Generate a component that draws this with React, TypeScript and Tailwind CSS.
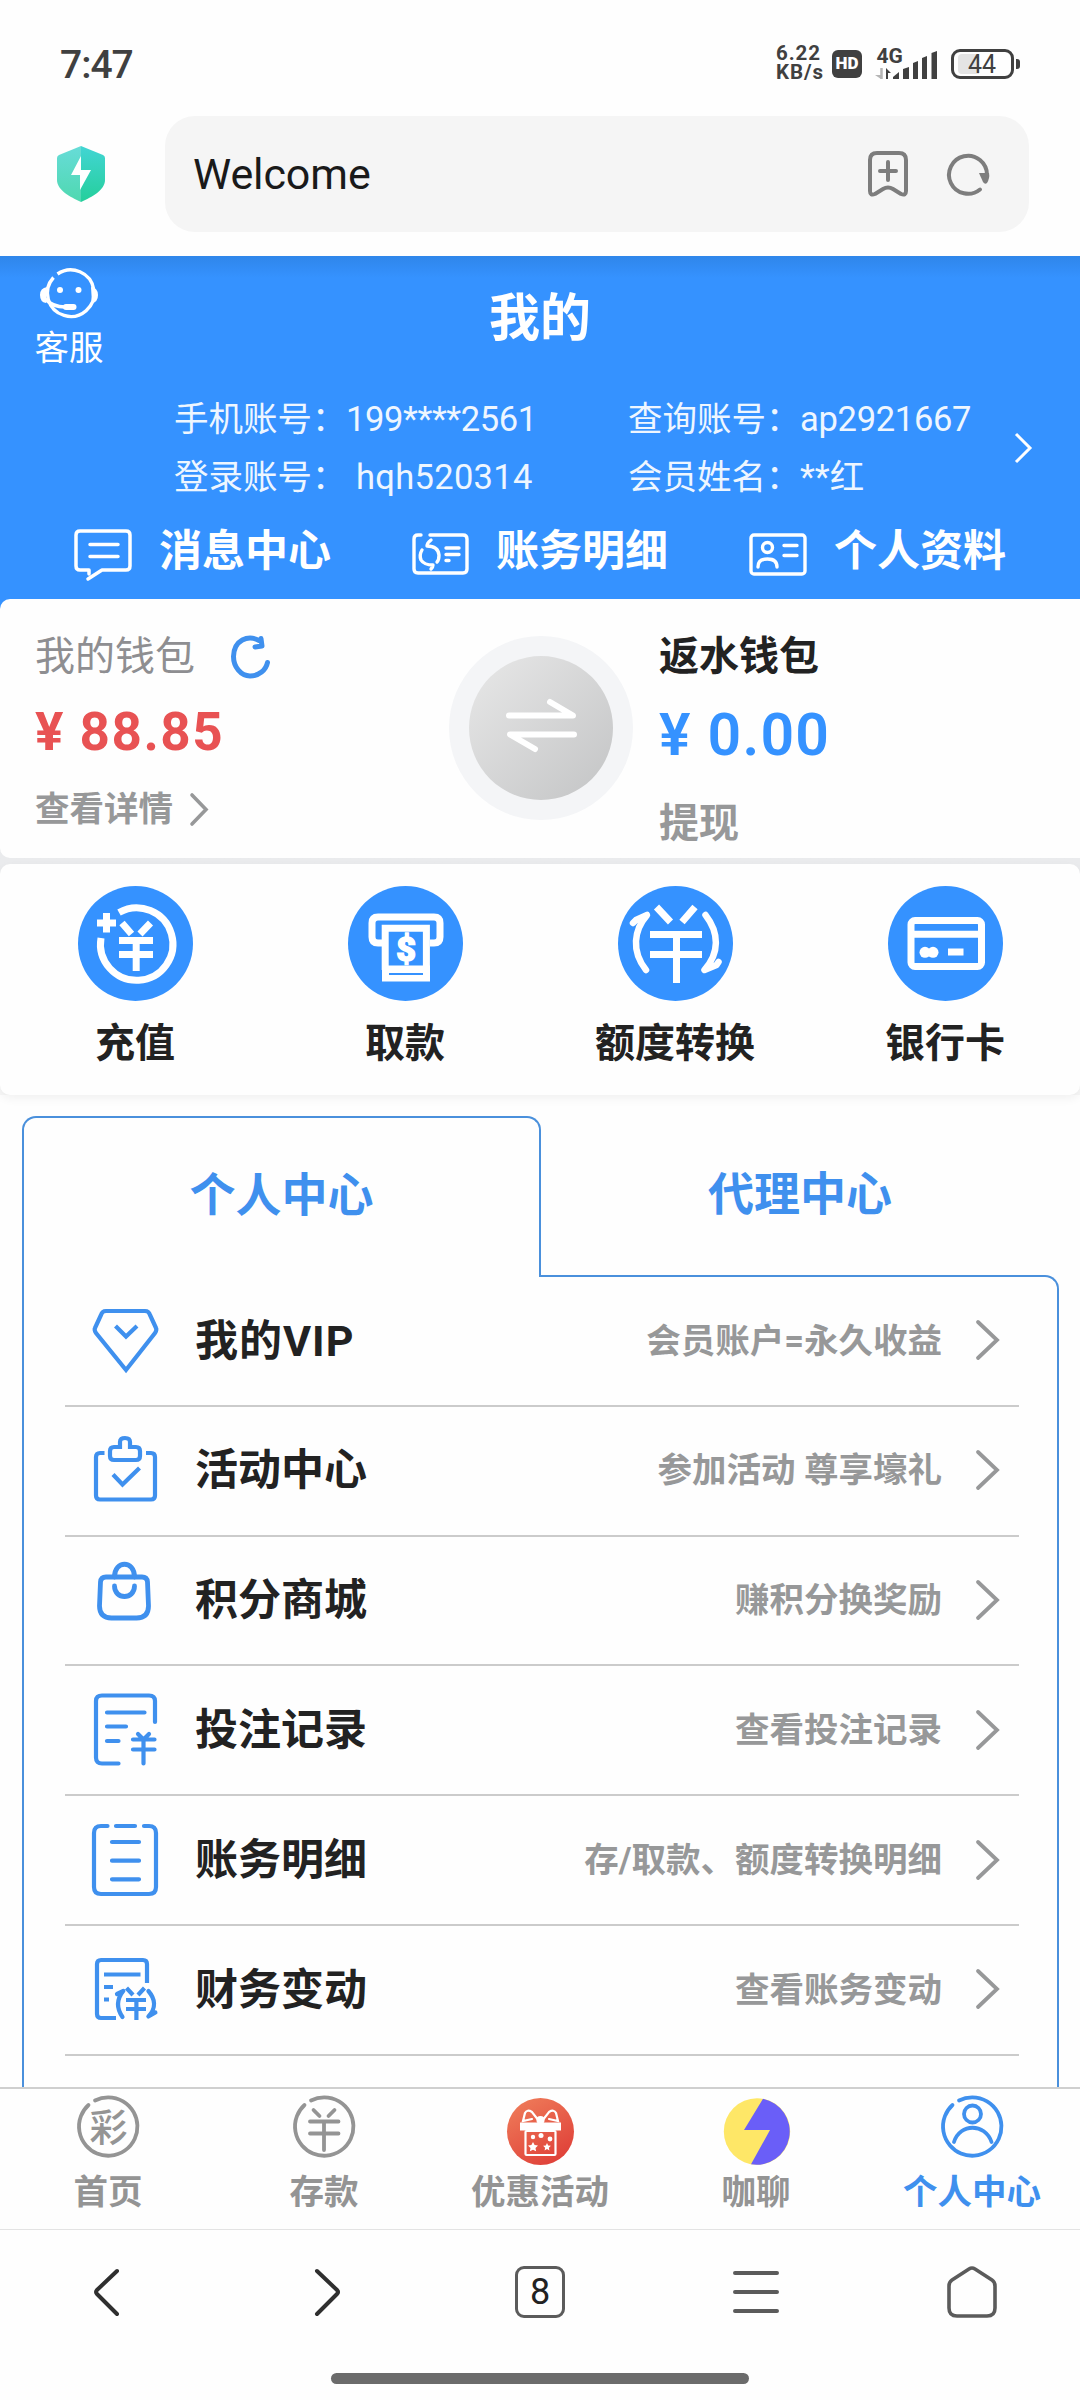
import type { ReactNode } from "react";

const BLUE = "#3592ff";

type IconProps = { children: ReactNode; w: number; h: number; className?: string };

const Icon = ({ children, w, h, className }: IconProps) => (
  <svg
    width={w}
    height={h}
    viewBox={`0 0 ${w} ${h}`}
    fill="none"
    stroke="currentColor"
    className={`block shrink-0 overflow-visible ${className ?? ""}`}
  >
    {children}
  </svg>
);

const StatusBar = () => (
  <div className="flex h-[116px] items-start justify-between pt-[46px] pr-[60px] pl-[60px] text-[#404040]">
    <span className="-mt-px text-[39px] leading-[40px] font-medium tracking-[-1px]">
      7:47
    </span>
    <div className="flex h-[36px] items-start">
      <div className="-mt-[2px] w-[56px] text-[20.5px] leading-[19px] font-bold tracking-[0.9px] whitespace-pre-line">
        {"6.22\nKB/s"}
      </div>
      <div className="mt-[4px] flex h-[28px] w-[30px] items-center justify-center rounded-[6px] bg-[#404040] text-[17px] font-black text-white">
        HD
      </div>
      <div className="ml-[13px] w-[76px]">
        <Icon w={64} h={34}>
          <text
            x="1.5"
            y="16.5"
            fill="currentColor"
            stroke="none"
            className="text-[21px] font-bold"
          >
            4G
          </text>
          <path d="M0 29h6v4z" fill="#b5b5b5" stroke="none" />
          <path d="M6.5 22v11" stroke="#b5b5b5" strokeWidth="2.5" />
          <path d="M11 33V22l5 5h-3v6z" fill="currentColor" stroke="none" />
          <g fill="currentColor" stroke="none">
            <path d="M18 33v-2l6-5v7z" />
            <path d="M28 33V23l6-2v12z" />
            <path d="M38 33V17l5-2v18z" />
            <path d="M47 33V12l5-2v23z" />
            <path d="M56.500 33V7l5.500-2v28z" />
          </g>
        </Icon>
      </div>
      <div className="mt-[3px] flex h-[30px] w-[63px] items-center rounded-[9px] border-3 border-[#404040] pl-1">
        <div className="h-5 w-[21px] rounded-l-[4px] bg-[#e4e4e4]" />
        <span className="-ml-[11px] text-[25px] leading-[25px]">44</span>
      </div>
      <div className="mt-[13px] ml-[2px] h-[10px] w-1 rounded-r-[3px] bg-[#404040]" />
    </div>
  </div>
);

const AddressBar = () => (
  <div className="flex h-[140px] items-start">
    <Icon w={48} h={56} className="mt-[30px] ml-[57px]">
      <defs>
        <linearGradient id="shieldL" x1="0" y1="0" x2="0" y2="1">
          <stop stopColor="#67dcd8" />
          <stop offset="1" stopColor="#4fd8b0" />
        </linearGradient>
        <linearGradient id="shieldR" x1="0" y1="0" x2="0" y2="1">
          <stop stopColor="#42d5d4" />
          <stop offset="1" stopColor="#25cf9b" />
        </linearGradient>
      </defs>
      <g stroke="none">
        <path d="M24 0 2 9Q0 10 0 12v22c0 10 13 17 24 22z" fill="url(#shieldL)" />
        <path d="M24 0l22 9q2 1 2 3v22c0 10-13 17-24 22z" fill="url(#shieldR)" />
        <path d="M24 10 14 29h9v15l11-20H24z" fill="#fff" />
      </g>
    </Icon>
    <div className="ml-[60px] flex h-[116px] w-[864px] items-center rounded-[30px] bg-[#f5f5f5] pr-[40px] pl-[28px] text-[#7d7d7d]">
      <span className="flex-1 text-[43px] tracking-[-0.1px] text-[#1a1a1a]">Welcome</span>
      <Icon w={40} h={46} className="mr-[39px]">
        <g strokeWidth="4" strokeLinecap="round" strokeLinejoin="round">
          <path d="M9 2h22q7 0 7 7v31q0 5-5 3l-8-5q-5-3-10 0l-8 5q-5 2-5-3V9q0-7 7-7z" />
          <path d="M12 20h16M20 11v18" />
        </g>
      </Icon>
      <Icon w={42} h={43}>
        <path d="M33 36.500A19 19 0 1 1 40 22" strokeWidth="4" strokeLinecap="round" />
        <path d="M32 20h10q1 5-2 10-2 2-4-1z" fill="currentColor" stroke="none" />
      </Icon>
    </div>
  </div>
);

const accounts = [
  { label: "手机账号：", value: "199****2561", track: "tracking-[-0.4px]" },
  { label: "查询账号：", value: "ap2921667", track: "tracking-[-0.3px]" },
  { label: "登录账号：", value: "hqh520314", track: "pl-[10px] tracking-[0.3px]" },
  { label: "会员姓名：", value: "**红", track: "tracking-[0px]" },
];

const Header = () => (
  <header className="h-[343px] bg-linear-to-b from-[#2f86ea] to-[#3592ff] to-[22px] text-white">
    <div className="flex h-[134px]">
      <div className="flex w-[138px] flex-col items-center pt-[14px]">
        <Icon w={58} h={50}>
          <path d="M17.500 4A23.300 23.300 0 1 1 13.500 7.500" strokeWidth="3.400" />
          <path
            d="M7 17Q0 18 0 25t6 8zM51 17q7 1 7 8t-6 8z"
            fill="currentColor"
            stroke="none"
          />
          <path d="M5 29q8 8 20 8" strokeWidth="3.600" />
          <path d="M26 37h7.500" strokeWidth="6" strokeLinecap="round" />
          <circle cx="20" cy="20" r="3" fill="currentColor" stroke="none" />
          <circle cx="38.500" cy="20" r="3" fill="currentColor" stroke="none" />
        </Icon>
        <span className="mt-[8px] text-[34.5px] leading-[40px]">客服</span>
      </div>
      <h1 className="w-[804px] pt-[33px] text-center text-[51px] leading-[60px] font-bold">
        我的
      </h1>
    </div>
    <div className="flex items-center pl-[174px]">
      <div className="grid w-[840px] grid-cols-[454px_1fr] text-[34.5px] leading-[58px] text-[#eef6ff]">
        {accounts.map((a) => (
          <div key={a.label} className="flex whitespace-pre">
            <span className="w-[172px]">{a.label}</span>
            <span className={a.track}>{a.value}</span>
          </div>
        ))}
      </div>
      <Icon w={18} h={30}>
        <path d="m2 1 14 14L2 29" strokeWidth="3" />
      </Icon>
    </div>
    <nav className="mt-[15px] flex h-[60px] items-center pl-[74px] text-[43px] leading-[60px] font-bold">
      <div className="flex w-[338px] items-center">
        <Icon w={58} h={52} className="mt-[7px]">
          <g strokeWidth="3.500" strokeLinecap="round" strokeLinejoin="round">
            <path d="M15 45v-4H6q-4 0-4-4V6q0-4 4-4h46q4 0 4 4v31q0 4-4 4H28L14 50" />
            <path d="M16 15.500h28M16 27.500h28" />
          </g>
        </Icon>
        <span className="ml-[27px]">消息中心</span>
      </div>
      <div className="flex w-[337px] items-center">
        <Icon w={57} h={42} className="mt-[6px]">
          <g strokeWidth="3.400" strokeLinecap="round">
            <path d="M9 2H6Q2 2 2 6v30q0 4 4 4h45q4 0 4-4V6q0-4-4-4H18" />
            <path
              d="M19 7q-4 3-4 6 11 0 12 9 0 5-2 7M10 17q-3 5-1 10 3 5 12 5 0 2-2 4"
              strokeLinejoin="round"
            />
            <path d="M34 15h13M34 21.500h13M34 27.500h3" />
          </g>
        </Icon>
        <span className="ml-[27px]">账务明细</span>
      </div>
      <div className="flex items-center">
        <Icon w={58} h={43} className="mt-[6px]">
          <g strokeWidth="3.400" strokeLinecap="round">
            <rect x="2" y="2" width="54" height="39" rx="3" />
            <circle cx="18.500" cy="14.500" r="5" />
            <path d="M9 34q0-8 9.500-8t9.500 8M35 12.500h13M35 22.500h13" />
          </g>
        </Icon>
        <span className="ml-[27px]">个人资料</span>
      </div>
    </nav>
  </header>
);

const Wallets = () => (
  <section className="relative flex h-[265px] bg-linear-to-b from-[#3592ff] from-[60%] to-[#eaebed] to-[60%]">
    <div className="h-[259px] w-[543px] rounded-l-[10px] bg-[#fefefe] pt-[35px] pl-[35px]">
      <div className="flex items-center text-[40px] leading-[46px] text-[#8e8e91]">
        我的钱包
        <Icon w={39} h={44} className="ml-[36px] text-[#3f90ee]">
          <path
            d="M28 5.500C17-.5 3 5 2.500 21.500 2.500 32 10 41 19 41c9 0 16-6 17.500-13.500"
            strokeWidth="5"
            strokeLinecap="round"
          />
          <path
            d="M30 3.500 31 11l-7 1"
            strokeWidth="5"
            strokeLinecap="round"
            strokeLinejoin="round"
          />
        </Icon>
      </div>
      <div className="mt-[21px] text-[53px] leading-[62px] font-bold tracking-[1.5px] text-[#e85253]">
        ¥ 88.85
      </div>
      <div className="mt-[23px] flex items-center text-[34.5px] leading-[46px] font-bold text-[#979899]">
        查看详情
        <Icon w={18} h={33} className="ml-[17px]">
          <path d="m2 2 14 14.500L2 31" strokeWidth="3.600" strokeLinecap="round" />
        </Icon>
      </div>
    </div>
    <div className="h-[259px] w-[537px] bg-[#fefefe] pt-[35px] pl-[116px]">
      <div className="text-[40px] leading-[46px] font-bold text-[#222]">返水钱包</div>
      <div className="mt-[22px] text-[59px] leading-[66px] font-semibold tracking-[1.2px] text-[#3592ff]">
        ¥ 0.00
      </div>
      <div className="mt-[33px] text-[40px] leading-[46px] font-bold text-[#979899]">
        提现
      </div>
    </div>
    <div className="absolute top-[37px] left-[449px] flex size-[184px] items-center justify-center rounded-full bg-[#f4f5f7]">
      <div className="flex size-[144px] items-center justify-center rounded-full bg-linear-to-br from-[#e8e8e8] to-[#c3c4c5] text-white">
        <Icon w={71} h={54} className="-mt-[5px]">
          <path
            d="M3 16.500h64L44 3M68 35.500H4L29 50"
            strokeWidth="6"
            strokeLinecap="round"
            strokeLinejoin="round"
          />
        </Icon>
      </div>
    </div>
  </section>
);

const actions = [
  {
    label: "充值",
    icon: (
      <>
        <path d="M41 26.500A36.200 36.200 0 1 1 23 52" />
        <path d="M19 37h19M28.500 27v19.500" />
        <path d="m44 37 9.500 11M72.500 37 62 48M41 54.500h34M41 68.500h34M58.200 54v31" />
      </>
    ),
  },
  {
    label: "取款",
    icon: (
      <>
        <path d="M34 57h-4q-6 0-6-6V37q0-6 6-6h56q6 0 6 6v14q0 6-6 6h-4" />
        <path d="M37.200 84V42.200h41.200V84" />
        <path d="M34 79.500h48v16H34z" fill="currentColor" stroke="none" />
        <path d="M41 88h34" stroke={BLUE} strokeWidth="2" />
        <text
          x="58"
          y="74.500"
          textAnchor="middle"
          fill="currentColor"
          strokeWidth="1.500"
          className="text-[34px] font-black"
        >
          $
        </text>
      </>
    ),
  },
  {
    label: "额度转换",
    icon: (
      <>
        <path d="m38.500 21 14 15M77 21 64 36M32 48.500h52M32 68.500h52M58.500 48v49" />
        <path
          d="M15 37l3-3 11-5C16 44 13 65 28 84M87.500 29c14 18 14 38-1 55l12-5 2-3"
          strokeLinecap="round"
          strokeLinejoin="round"
          strokeWidth="6.500"
        />
      </>
    ),
  },
  {
    label: "银行卡",
    icon: (
      <>
        <rect x="23" y="34.500" width="70.500" height="46" rx="4" />
        <path d="M23 48.300h70M60 66h15.500" />
        <circle cx="37" cy="66.300" r="5.500" fill="currentColor" stroke="none" />
        <circle cx="45" cy="66.300" r="5.500" fill="currentColor" stroke="none" />
      </>
    ),
  },
];

const Actions = () => (
  <section className="bg-linear-to-b from-[#eaebed] from-50% to-[#f7f7f7] to-50%">
    <div className="relative grid h-[231px] grid-cols-4 rounded-[10px] bg-[#fefefe] pt-[22px] shadow-[0_4px_10px_rgba(0,0,0,0.05)]">
      {actions.map((a) => (
        <div key={a.label} className="flex flex-col items-center">
          <div className="rounded-full bg-[#3592ff] text-white">
            <Icon w={115} h={115}>
              <g strokeWidth="7">{a.icon}</g>
            </Icon>
          </div>
          <span className="mt-[17px] text-[40px] leading-[52px] font-bold text-[#222]">
            {a.label}
          </span>
        </div>
      ))}
    </div>
  </section>
);

const rows = [
  {
    title: "我的VIP",
    note: "会员账户=永久收益",
    icon: (
      <>
        <path d="M14 9h39q4 0 5 4l6 13q1 2-1 5L34 68 4 31q-2-3-1-5L9 13q1-4 5-4z" />
        <path d="m23.500 24 10.500 10.500L45 24" />
      </>
    ),
  },
  {
    title: "活动中心",
    note: "参加活动 尊享壕礼",
    icon: (
      <>
        <path d="M12.500 21H8q-4 0-4 4v38.500q0 4 4 4h51q4 0 4-4V25q0-4-4-4h-5" />
        <path d="M28 15v-5q0-4 5-4t5 4v5h6q4 0 4 4v5q0 4-4 4H22q-4 0-4-4v-5q0-4 4-4z" />
        <path d="M21 42.500l9.500 10L47.500 36" />
      </>
    ),
  },
  {
    title: "积分商城",
    note: "赚积分换奖励",
    icon: (
      <g strokeWidth="4.800">
        <path d="M14 15h36q5 0 5.500 5l1 24q0 12-12 12h-25q-12 0-12-12l1-24q.5-5 5.500-5z" />
        <path d="M22.500 15c0-17 20-17 20 0M22.500 24c0 14 20 14 20 0" strokeLinecap="round" />
      </g>
    ),
  },
  {
    title: "投注记录",
    note: "查看投注记录",
    icon: (
      <g strokeLinecap="round">
        <path d="M26.500 71.500H10q-6 0-6-6V9q0-5.500 6-5.500h47q6 0 6 5.500v21" />
        <path d="M15 20.500h37.500M15 34.500h19M15 49h11.500" />
        <path d="m46 42 5.500 5.500L57 42M41 47.500h21.500M41 57.500h21.500M51.500 48v23.500" />
      </g>
    ),
  },
  {
    title: "账务明细",
    note: "存/取款、额度转换明细",
    icon: (
      <g strokeLinecap="round">
        <path d="M15.500 4H9Q2 4 2 11v54q0 7 7 7h48q7 0 7-7V11q0-7-7-7h-5M24 4h19" />
        <path d="M20 20h27M20 38.700h27M20 57.300h27" />
      </g>
    ),
  },
  {
    title: "财务变动",
    note: "查看账务变动",
    icon: (
      <>
        <path d="M24 67H9q-4 0-4-4V13q0-4 4-4h42q4 0 4 4v19" />
        <path d="M12 23.500h36.500M12 36h9M12 48.500h5" />
        <path d="m34.500 37 6.500 7M52.500 37 46 44M34 49h20M34 58h20M44.400 49v20" />
        <path
          d="m25 43 6.300-3C24 49 25 58 30.500 66M56.400 40c7 8 8 17 0 25.500l7-4"
          strokeLinecap="round"
          strokeLinejoin="round"
        />
      </>
    ),
  },
];

const CenterPanel = () => (
  <section className="h-[992px] overflow-hidden pt-[21px] pr-[21px] pl-[22px]">
    <div className="flex h-[161px] items-stretch text-[46px] leading-[60px] font-bold text-[#3f90ee]">
      <div className="relative z-10 w-[519px] rounded-t-[14px] border-2 border-b-0 border-[#4a90dc] bg-[#fefefe] pt-[47px] text-center">
        个人中心
      </div>
      <div className="flex-1 pt-[48px] text-center">代理中心</div>
    </div>
    <div className="-mt-[2px] h-[830px] rounded-tr-[14px] border-x-2 border-t-2 border-[#4a90dc] pr-[38px] pl-[41px]">
      {rows.map((r) => (
        <div
          key={r.title}
          className="flex h-[129.8px] items-center border-b-2 border-[#cbcbcb] pr-[20px] pl-[27px]"
        >
          <Icon w={68} h={76} className="-mt-px text-[#3f90ee]">
            <g strokeWidth="4.200">{r.icon}</g>
          </Icon>
          <span
            className={
              r.title.endsWith("VIP")
                ? "ml-[35px] flex-1 text-[43px] font-bold tracking-[1px] text-[#222]"
                : "ml-[35px] flex-1 text-[43px] font-bold text-[#222]"
            }
          >
            {r.title}
          </span>
          <span className="mt-px text-[34.5px] font-bold text-[#979899]">{r.note}</span>
          <Icon w={23} h={40} className="ml-[34px] -mt-px text-[#979899]">
            <path d="m2 2 19 18L2 38" strokeWidth="3.800" strokeLinecap="round" />
          </Icon>
        </div>
      ))}
    </div>
  </section>
);

const ring = "M18 5.500A29.200 29.200 0 1 1 11.500 10";

const tabs = [
  {
    label: "首页",
    icon: (
      <>
        <path d={ring} />
        <text
          x="31.500"
          y="45.500"
          textAnchor="middle"
          fill="currentColor"
          stroke="none"
          className="text-[38px] font-medium"
        >
          彩
        </text>
      </>
    ),
  },
  {
    label: "存款",
    icon: (
      <>
        <path d={ring} />
        <path d="m20.500 15 6 6M41.500 15l-6 6M17 26.500h28.500M17 38.500h28.500M31 27v28" />
      </>
    ),
  },
  {
    label: "优惠活动",
    icon: (
      <g transform="translate(-2 3)">
        <defs>
          <linearGradient id="gift" x1="0" y1="0" x2="0.600" y2="1">
            <stop stopColor="#f0805c" />
            <stop offset="1" stopColor="#e0433a" />
          </linearGradient>
        </defs>
        <circle cx="33.500" cy="33.500" r="33.500" fill="url(#gift)" stroke="none" />
        <g stroke="#fff" strokeWidth="2.200">
          <rect x="18.500" y="33" width="30" height="24" rx="1" />
          <path d="M13 24.500h41v8H13z" fill="#fff" stroke="none" />
          <path d="M32 23 25 14q-5-3-7 1l-2 8 9-2M35 23l7-9q5-3 7 1l2 8-9-2" />
          <circle cx="33.500" cy="22" r="3" fill="#fff" />
        </g>
        <g fill="#fff" stroke="none">
          <path d="m26 44 1.600 3 3.400.5-2.500 2.400.6 3.400-3.100-1.600-3.100 1.600.6-3.400-2.500-2.400 3.400-.5z" />
          <path d="m40 45 1.200 2.400 2.700.4-2 1.900.5 2.700-2.400-1.300-2.400 1.300.5-2.700-2-1.900 2.700-.4z" />
          <circle cx="26" cy="39" r="2.200" />
          <circle cx="34" cy="37.500" r="2.500" />
          <circle cx="43" cy="41" r="2.400" />
        </g>
      </g>
    ),
  },
  {
    label: "咖聊",
    icon: (
      <g transform="translate(-1 3)" stroke="none">
        <circle cx="33" cy="33.500" r="33.200" fill="#fee767" />
        <path d="M39 .8A33.300 33.300 0 0 1 27 66.300L46 32H20z" fill="#6a5ef8" />
      </g>
    ),
  },
  {
    label: "个人中心",
    active: true,
    icon: (
      <>
        <path d={ring} />
        <circle cx="31.500" cy="19" r="8.500" />
        <path d="M13 47c6-19 31-19 37.500 0" />
      </>
    ),
  },
];

const TabBar = () => (
  <nav className="flex h-[143px] border-t-2 border-b border-t-[#cfcfcf] border-b-[#e3e3e3] pt-[6px]">
    {tabs.map((t) => (
      <div
        key={t.label}
        className={
          t.active
            ? "flex w-[216px] flex-col items-center text-[#3f90ee]"
            : "flex w-[216px] flex-col items-center text-[#949494]"
        }
      >
        <Icon w={62} h={63}>
          <g strokeWidth="3.800" strokeLinecap="round">
            {t.icon}
          </g>
        </Icon>
        <span className="mt-[12px] text-[34.5px] leading-[44px] font-bold">{t.label}</span>
      </div>
    ))}
  </nav>
);

const BrowserBar = () => (
  <footer className="flex h-[170px] flex-col items-center text-[#5b5b5b]">
    <div className="flex h-[124px] w-full items-center">
      <div className="flex w-[216px] justify-center text-[#2f2f2f]">
        <Icon w={25} h={47} className="mr-[4px]">
          <path d="M23 2 3 21q-2 2 0 4l20 20" strokeWidth="4" strokeLinecap="round" />
        </Icon>
      </div>
      <div className="flex w-[216px] justify-center text-[#2f2f2f]">
        <Icon w={25} h={47} className="ml-[7px]">
          <path d="m2 2 20 19q2 2 0 4L2 45" strokeWidth="4" strokeLinecap="round" />
        </Icon>
      </div>
      <div className="flex w-[216px] justify-center">
        <div className="flex h-[52px] w-[50px] items-center justify-center rounded-[9px] border-[3.500px] border-[#5b5b5b] text-[36px] text-[#222]">
          8
        </div>
      </div>
      <div className="flex w-[216px] justify-center">
        <Icon w={46} h={42}>
          <path d="M2 2h42M2 21h42M2 40h42" strokeWidth="4" strokeLinecap="round" />
        </Icon>
      </div>
      <div className="flex w-[216px] justify-center">
        <Icon w={50} h={52}>
          <path
            d="M22 3 5 14q-3 2-3 6v22q0 8 8 8h30q8 0 8-8V20q0-4-3-6L28 3q-3-2-6 0z"
            strokeWidth="3.600"
          />
        </Icon>
      </div>
    </div>
    <div className="mt-[19px] h-[11px] w-[418px] rounded-full bg-[#6b6b6b]" />
  </footer>
);

export default function App() {
  return (
    <div className="h-[2400px] w-[1080px] overflow-hidden bg-[#fefefe] font-[Roboto,'Noto_Sans_CJK_SC',sans-serif] whitespace-nowrap">
      <StatusBar />
      <AddressBar />
      <Header />
      <Wallets />
      <Actions />
      <CenterPanel />
      <TabBar />
      <BrowserBar />
    </div>
  );
}
